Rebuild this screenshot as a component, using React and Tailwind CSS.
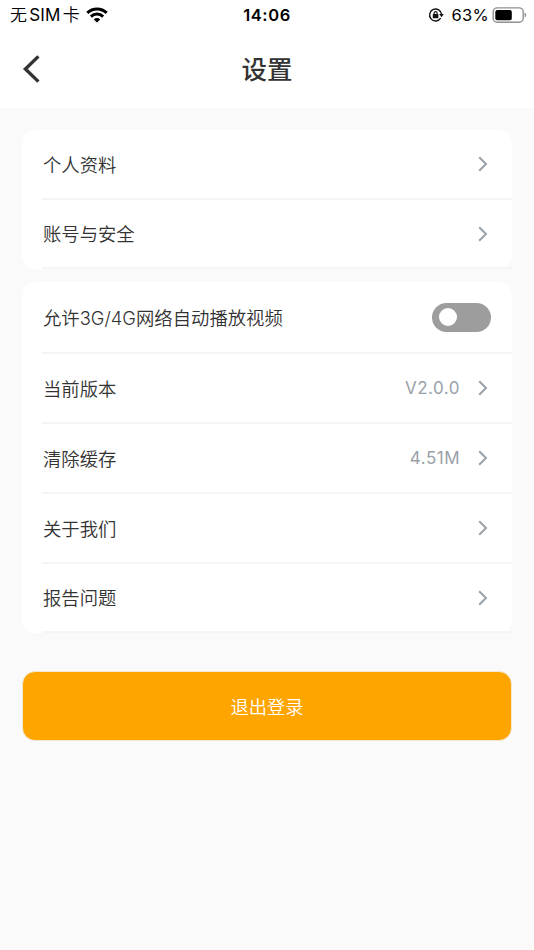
function WifiIcon() {
  return (
    <svg className="ml-[6px] h-[16px] w-[22px]" viewBox="0 0 22 16" fill="none" stroke="#000" strokeWidth="3">
      <path d="M1.3 5.9a13.8 13.8 0 0 1 19.4 0" />
      <path d="M4.9 9.6a8.7 8.7 0 0 1 12.2 0" />
      <path d="M11 15.6 7.8 12.4a4.6 4.6 0 0 1 6.4 0z" fill="#000" stroke="none" />
    </svg>
  );
}

function RotationLockIcon() {
  return (
    <svg className="h-[16px] w-[16px]" viewBox="0 0 16 16" fill="none" stroke="#111" strokeWidth="1.4">
      <path d="M12.7 11.2A6 6 0 1 1 13.6 7.4" />
      <path d="M11.2 7h4.6l-2.3 3.3z" fill="#111" stroke="none" />
      <rect x="4.8" y="7.1" width="5.6" height="4.2" rx="0.6" fill="#111" stroke="none" />
      <path d="M6.1 7.4V6.1a1.5 1.5 0 0 1 3 0v1.3" strokeWidth="1.1" />
    </svg>
  );
}

function BatteryIcon() {
  return (
    <svg className="ml-[3px] h-[16px] w-[35px]" viewBox="0 0 35 16">
      <rect x="1.2" y="0.9" width="30" height="14.4" rx="4" fill="none" stroke="#909090" strokeWidth="1.4" />
      <rect x="3.3" y="2.9" width="16.5" height="10.4" rx="2" fill="#000" />
      <path d="M32.6 5.6c2.1.9 2.1 4.1 0 5z" fill="#909090" />
    </svg>
  );
}

function StatusBar() {
  return (
    <div className="grid h-[30px] grid-cols-3 items-center text-black">
      <div className="flex items-center pl-[10px]">
        <span className="pt-px text-[17px] leading-[29px] font-[350] tracking-[0.2px]">无<span className="mx-[2px] font-normal">SIM</span>卡</span>
        <WifiIcon />
      </div>
      <span className="text-center text-[16.5px] leading-[30px] font-semibold tracking-[0.6px]">14:06</span>
      <div className="flex items-center justify-end pr-[7px]">
        <RotationLockIcon />
        <span className="ml-[7px] text-[16.5px] leading-[30px] tracking-[0.3px]">63%</span>
        <BatteryIcon />
      </div>
    </div>
  );
}

function Chevron() {
  return (
    <svg className="h-[16px] w-[10px]" viewBox="0 0 10 16" fill="none" stroke="#99a1a9" strokeWidth="2">
      <path d="M1.2 1.2 8 8l-6.8 6.8" />
    </svg>
  );
}

function Row({ label, value, toggle, size = "h-[70px]" }) {
  return (
    <div className={`ml-[20px] flex items-center justify-between border-b-2 border-[#f5f5f5] pr-[21px] pl-px ${size}`}>
      <span className="pt-[3px] text-[18.35px] font-[350] text-[#333]">{label}</span>
      {toggle ? (
        <button className="flex h-[29px] w-[59px] items-center rounded-full bg-[#9d9d9d] pl-[7px]" aria-label={label}>
          <span className="h-[18px] w-[18px] rounded-full bg-white" />
        </button>
      ) : (
        <div className="flex items-center pr-[3px]">
          {value && <span className="mr-[18px] pt-px text-[17px] tracking-[0.5px] text-[#99a1a9]">{value}</span>}
          <Chevron />
        </div>
      )}
    </div>
  );
}

export default function App() {
  return (
    <div className="h-[950px] w-[534px] overflow-hidden bg-[#fafafa] font-['Inter','Noto_Sans_CJK_SC',sans-serif]">
      <header className="h-[108px] bg-white">
        <StatusBar />
        <div className="grid h-[78px] grid-cols-3 items-center">
          <svg className="ml-[22px] h-[30px] w-[20px]" viewBox="0 0 20 30" fill="none" stroke="#333" strokeWidth="3.4">
            <path d="M16.4 2.4 3.4 15l13 12.6" />
          </svg>
          <h1 className="pt-[2px] text-center text-[25.5px] font-medium text-[#333]">设置</h1>
        </div>
      </header>
      <main className="px-[22px] pt-[22px]">
        <section className="rounded-[13px] bg-white">
          <Row label="个人资料" size="h-[70px]" />
          <Row label="账号与安全" size="h-[69px]" />
        </section>
        <section className="mt-[13px] rounded-[13px] bg-white">
          <Row label="允许3G/4G网络自动播放视频" toggle size="h-[72px]" />
          <Row label="当前版本" value="V2.0.0" />
          <Row label="清除缓存" value="4.51M" />
          <Row label="关于我们" />
          <Row label="报告问题" size="h-[69px]" />
        </section>
        <button className="mt-[38px] flex h-[70px] w-full items-center justify-center rounded-[13px] border border-[#f3e8d3] bg-[#ffa500] pt-[3px] text-[18.2px] font-[350] text-white">
          退出登录
        </button>
      </main>
    </div>
  );
}
